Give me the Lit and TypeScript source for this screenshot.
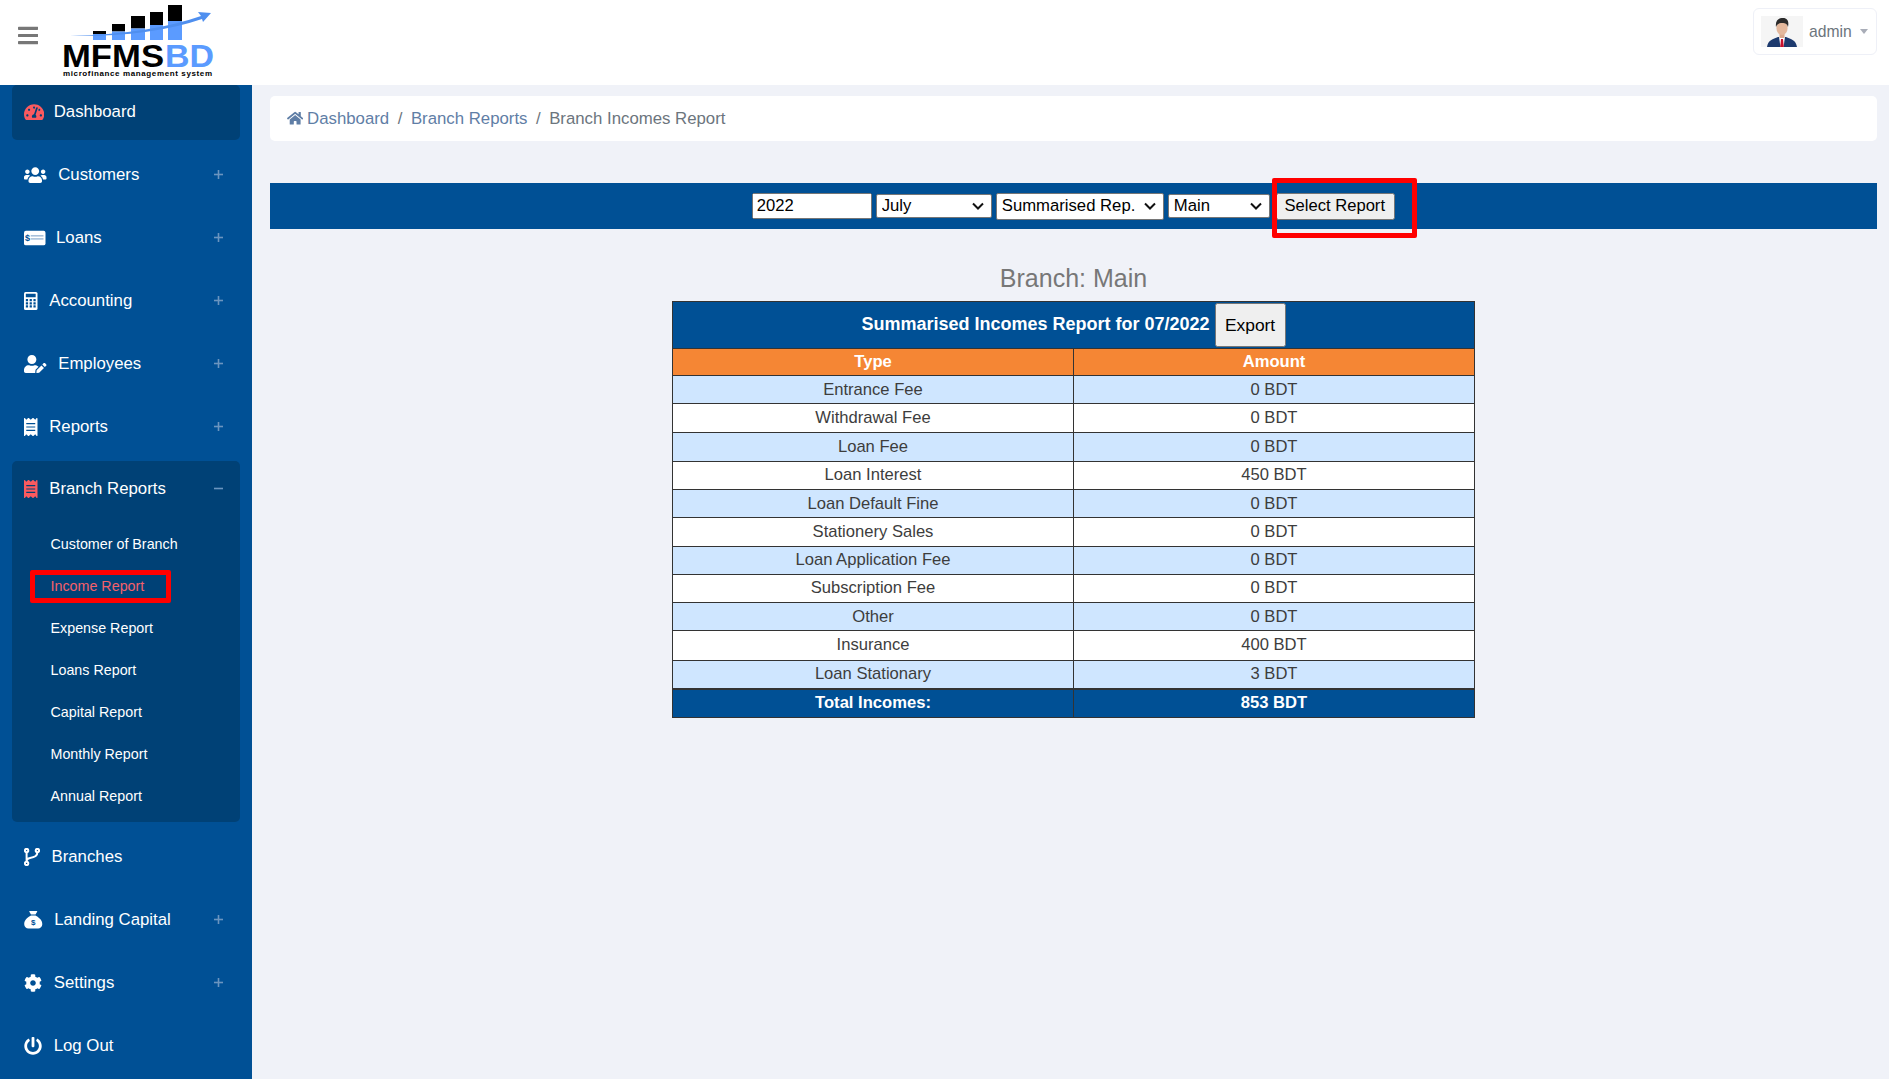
import { LitElement, css, html, svg } from "lit";
import { customElement } from "lit/decorators.js";

const FA: Record<string, [number, string]> = {
  gauge: [576, "M288 32C128.94 32 0 160.94 0 320c0 52.8 14.25 102.26 39.06 144.8 5.61 9.62 16.3 15.2 27.44 15.2h443c11.14 0 21.83-5.58 27.44-15.2C561.75 422.26 576 372.8 576 320c0-159.06-128.94-288-288-288zm0 64c14.71 0 26.58 10.13 30.32 23.65-1.11 2.26-2.64 4.23-3.45 6.67l-9.22 27.67c-5.13 3.49-10.97 6.01-17.64 6.01-17.67 0-32-14.33-32-32S270.33 96 288 96zM96 384c-17.67 0-32-14.33-32-32s14.33-32 32-32 32 14.33 32 32-14.33 32-32 32zm48-160c-17.67 0-32-14.33-32-32s14.33-32 32-32 32 14.33 32 32-14.33 32-32 32zm246.77-72.41l-61.33 184C343.13 347.33 352 364.54 352 384c0 11.72-3.38 22.55-8.88 32H232.88c-5.5-9.45-8.88-20.28-8.88-32 0-33.94 26.5-61.43 59.9-63.59l61.34-184.01c4.17-12.56 17.73-19.45 30.36-15.17 12.57 4.19 19.35 17.79 15.17 30.36zm14.66 57.2l15.52-46.55c3.47-1.29 7.13-2.23 11.05-2.23 17.67 0 32 14.33 32 32s-14.33 32-32 32c-11.38-.01-20.89-6.28-26.57-15.22zM480 384c-17.67 0-32-14.33-32-32s14.33-32 32-32 32 14.33 32 32-14.33 32-32 32z"],
  users: [640, "M96 224c35.3 0 64-28.7 64-64s-28.7-64-64-64-64 28.7-64 64 28.7 64 64 64zm448 0c35.3 0 64-28.7 64-64s-28.7-64-64-64-64 28.7-64 64 28.7 64 64 64zm32 32h-64c-17.6 0-33.5 7.1-45.1 18.6 40.3 22.1 68.9 62 75.1 109.4h66c17.7 0 32-14.3 32-32v-32c0-35.3-28.7-64-64-64zm-256 0c61.9 0 112-50.1 112-112S381.9 32 320 32 208 82.1 208 144s50.1 112 112 112zm76.8 32h-8.3c-20.8 10-43.9 16-68.5 16s-47.6-6-68.5-16h-8.3C179.6 288 128 339.6 128 403.2V432c0 26.5 21.5 48 48 48h288c26.5 0 48-21.5 48-48v-28.8c0-63.6-51.6-115.2-115.2-115.2zm-223.7-13.4C161.5 263.1 145.6 256 128 256H64c-35.3 0-64 28.7-64 64v32c0 17.7 14.3 32 32 32h65.9c6.3-47.4 34.9-87.3 75.2-109.4z"],
  userEdit: [640, "M224 256c70.7 0 128-57.3 128-128S294.7 0 224 0 96 57.3 96 128s57.3 128 128 128zm89.6 32h-16.7c-22.2 10.2-46.9 16-72.9 16s-50.6-5.8-72.9-16h-16.7C60.2 288 0 348.2 0 422.4V464c0 26.5 21.5 48 48 48h274.9c-2.4-6.8-3.4-14-2.6-21.3l6.8-60.9 1.2-11.1 7.9-7.9 77.3-77.3c-24.5-27.7-60-45.5-99.9-45.5zm45.3 145.3l-6.8 61c-1.1 10.2 7.5 18.8 17.6 17.6l60.9-6.8 137.9-137.9-71.7-71.7-137.9 137.8zM633 268.9L595.1 231c-9.3-9.3-24.5-9.3-33.8 0l-37.8 37.8-4.1 4.1 71.8 71.7 41.8-41.8c9.3-9.4 9.3-24.5 0-33.9z"],
  receipt: [384, "M358.4 3.2L320 48 265.6 3.2a15.9 15.9 0 0 0-19.2 0L192 48 137.6 3.2a15.9 15.9 0 0 0-19.2 0L64 48 25.6 3.2C15-4.7 0 2.8 0 16v480c0 13.2 15 20.7 25.6 12.8L64 464l54.4 44.8a15.9 15.9 0 0 0 19.2 0L192 464l54.4 44.8a15.9 15.9 0 0 0 19.2 0L320 464l38.4 44.8c10.5 7.9 25.6.4 25.6-12.8V16c0-13.2-15-20.7-25.6-12.8zM320 360c0 4.4-3.6 8-8 8H72c-4.4 0-8-3.6-8-8v-16c0-4.4 3.6-8 8-8h240c4.4 0 8 3.6 8 8v16zm0-96c0 4.4-3.6 8-8 8H72c-4.4 0-8-3.6-8-8v-16c0-4.4 3.6-8 8-8h240c4.4 0 8 3.6 8 8v16zm0-96c0 4.4-3.6 8-8 8H72c-4.4 0-8-3.6-8-8v-16c0-4.4 3.6-8 8-8h240c4.4 0 8 3.6 8 8v16z"],
  cog: [512, "M487.4 315.7l-42.6-24.6c4.3-23.2 4.3-47 0-70.2l42.6-24.6c4.9-2.8 7.1-8.6 5.5-14-11.1-35.6-30-67.8-54.7-94.6-3.8-4.1-10-5.1-14.8-2.3L380.8 110c-17.9-15.4-38.5-27.3-60.8-35.1V25.8c0-5.6-3.9-10.5-9.4-11.7-36.7-8.2-74.3-7.8-109.2 0-5.5 1.2-9.4 6.1-9.4 11.7V75c-22.2 7.9-42.8 19.8-60.8 35.1L88.7 85.5c-4.9-2.8-11-1.9-14.8 2.3-24.7 26.7-43.6 58.9-54.7 94.6-1.7 5.4.6 11.2 5.5 14L67.3 221c-4.3 23.2-4.3 47 0 70.2l-42.6 24.6c-4.9 2.8-7.1 8.6-5.5 14 11.1 35.6 30 67.8 54.7 94.6 3.8 4.1 10 5.1 14.8 2.3l42.6-24.6c17.9 15.4 38.5 27.3 60.8 35.1v49.2c0 5.6 3.9 10.5 9.4 11.7 36.7 8.2 74.3 7.8 109.2 0 5.5-1.2 9.4-6.1 9.4-11.7v-49.2c22.2-7.9 42.8-19.8 60.8-35.1l42.6 24.6c4.9 2.8 11 1.9 14.8-2.3 24.7-26.7 43.6-58.9 54.7-94.6 1.5-5.5-.7-11.3-5.6-14.1zM256 336c-44.1 0-80-35.9-80-80s35.9-80 80-80 80 35.9 80 80-35.9 80-80 80z"],
  power: [512, "M400 54.1c63 45 104 118.6 104 201.9 0 136.8-110.8 247.7-247.5 248C120 504.3 8.2 393 8 256.4 7.9 173.1 48.9 99.3 111.8 54.2c11.7-8.3 28-4.8 35 7.7L162.6 90c5.9 10.5 3.1 23.8-6.6 31-41.5 30.8-68 79.6-68 134.9-.1 92.3 74.5 168.1 168 168.1 91.6 0 168.6-74.2 168-169.1-.3-51.8-24.7-101.8-68.1-134-9.7-7.2-12.4-20.5-6.5-30.9l15.8-28.1c7-12.4 23.2-16.1 34.8-7.8zM296 264V24c0-13.3-10.7-24-24-24h-32c-13.3 0-24 10.7-24 24v240c0 13.3 10.7 24 24 24h32c13.3 0 24-10.7 24-24z"],
  home: [576, "M280.37 148.26L96 300.11V464a16 16 0 0 0 16 16l112.06-.29a16 16 0 0 0 15.92-16V368a16 16 0 0 1 16-16h64a16 16 0 0 1 16 16v95.64a16 16 0 0 0 16 16.05L464 480a16 16 0 0 0 16-16V300L295.67 148.26a12.19 12.19 0 0 0-15.3 0zM571.6 251.47L488 182.56V44.05a12 12 0 0 0-12-12h-56a12 12 0 0 0-12 12v72.61L318.47 43a48 48 0 0 0-61 0L4.34 251.47a12 12 0 0 0-1.6 16.9l25.5 31A12 12 0 0 0 45.15 301l235.22-193.74a12.19 12.19 0 0 1 15.3 0L530.9 301a12 12 0 0 0 16.9-1.6l25.5-31a12 12 0 0 0-1.7-16.93z"],
  bars: [448, "M16 132h416c8.837 0 16-7.163 16-16V76c0-8.837-7.163-16-16-16H16C7.163 60 0 67.163 0 76v40c0 8.837 7.163 16 16 16zm0 160h416c8.837 0 16-7.163 16-16v-40c0-8.837-7.163-16-16-16H16c-8.837 0-16 7.163-16 16v40c0 8.837 7.163 16 16 16zm0 160h416c8.837 0 16-7.163 16-16v-40c0-8.837-7.163-16-16-16H16c-8.837 0-16 7.163-16 16v40c0 8.837 7.163 16 16 16z"],
};

const icon = (name: string, size = 18) => {
  const [w, d] = FA[name];
  return html`<svg class="ic" width=${(w / 512) * size} height=${size} viewBox="0 0 ${w} 512" fill="currentColor"><path d=${d}></path></svg>`;
};

// drawn by hand, these carry coloured detail inside the shape
const cardIcon = html`<svg class="ic tight" width="21.5" height="18" viewBox="0 0 640 512">
  <rect x="0" y="40" width="640" height="432" rx="56" fill="#fff"></rect>
  <text x="105" y="345" font-size="270" font-weight="700" font-family="Liberation Sans, sans-serif" text-anchor="middle" fill="#005095">$</text>
  <rect x="200" y="170" width="380" height="42" fill="#9db9d6"></rect>
  <rect x="200" y="262" width="380" height="42" fill="#9db9d6"></rect>
</svg>`;

const calcIcon = html`<svg class="ic" width="13.5" height="18" viewBox="0 0 384 512">
  <rect x="0" y="0" width="384" height="512" rx="44" fill="#fff"></rect>
  <rect x="52" y="52" width="280" height="100" rx="8" fill="#005095"></rect>
  ${[200, 290, 380].map((y) =>
    [52, 160, 268].map((x) => svg`<rect x=${x} y=${y} width="64" height="64" rx="8" fill="#005095"></rect>`)
  )}
</svg>`;

const sackIcon = html`<svg class="ic" width="18.5" height="18" viewBox="0 0 512 512">
  <path fill="#fff" d="M192 96h128l47.4-71.12A16 16 0 0 0 354.09 0H157.94a16 16 0 0 0-13.31 24.88zm128 32H192C-10.38 243.4 0 334.55 0 384c0 61.86 53.79 112 120.13 112h271.74C458.21 496 512 445.86 512 384c0-48.95 9.19-141.54-192-256z"></path>
  <text x="256" y="410" font-size="230" font-weight="700" font-family="Liberation Sans, sans-serif" text-anchor="middle" fill="#005095">$</text>
</svg>`;

// outlined fork with hollow end dots
const branchIcon = html`<svg class="ic branch" width="16" height="18" viewBox="0 0 16 18" fill="none" stroke="#fff" stroke-width="2">
  <circle cx="2.6" cy="2.6" r="1.7"></circle>
  <circle cx="2.6" cy="15.4" r="1.7"></circle>
  <circle cx="13.4" cy="2.6" r="1.7"></circle>
  <path d="M2.6 4.3 V13.7 M13.4 4.3 C13.4 9 9 9.6 6 9.9 C4 10.1 2.8 11 2.6 13"></path>
</svg>`;

const MENU = [
  { label: "Customers", ic: icon("users"), more: true },
  { label: "Loans", ic: cardIcon, more: true },
  { label: "Accounting", ic: calcIcon, more: true },
  { label: "Employees", ic: icon("userEdit"), more: true },
  { label: "Reports", ic: icon("receipt"), more: true },
];
const MENU2 = [
  { label: "Branches", ic: branchIcon, more: false },
  { label: "Landing Capital", ic: sackIcon, more: true },
  { label: "Settings", ic: icon("cog"), more: true },
  { label: "Log Out", ic: icon("power"), more: false },
];
const SUBS = ["Customer of Branch", "Income Report", "Expense Report", "Loans Report", "Capital Report", "Monthly Report", "Annual Report"];
const ROWS: [string, string][] = [
  ["Entrance Fee", "0 BDT"],
  ["Withdrawal Fee", "0 BDT"],
  ["Loan Fee", "0 BDT"],
  ["Loan Interest", "450 BDT"],
  ["Loan Default Fine", "0 BDT"],
  ["Stationery Sales", "0 BDT"],
  ["Loan Application Fee", "0 BDT"],
  ["Subscription Fee", "0 BDT"],
  ["Other", "0 BDT"],
  ["Insurance", "400 BDT"],
  ["Loan Stationary", "3 BDT"],
];

const CHEVRON =
  "url(\"data:image/svg+xml,%3Csvg xmlns='http://www.w3.org/2000/svg' width='12' height='8'%3E%3Cpath d='M1 1.5l5 5 5-5' fill='none' stroke='%23111' stroke-width='2'/%3E%3C/svg%3E\")";

@customElement("app-root")
export class AppRoot extends LitElement {
  static styles = css`
    :host {
      display: block;
      height: 100vh;
      overflow: hidden;
      background: #f0f2f8;
      font-family: "Liberation Sans", Arial, sans-serif;
      font-size: 16.6px;
    }
    .top {
      display: flex;
      align-items: flex-start;
      height: 85px;
      background: #fff;
      padding: 0 12px 0 18px;
    }
    .burger {
      color: #777;
      display: flex;
      margin: 24px 10px 0 0;
    }
    .logo {
      display: block;
    }
    .user {
      margin: 8px 0 0 auto;
      display: flex;
      align-items: center;
      width: 124px;
      height: 47px;
      box-sizing: border-box;
      border: 1px solid #eef0f7;
      border-radius: 6px;
      padding-left: 7px;
      color: #6c757d;
      font-size: 15.7px;
    }
    .user svg {
      display: block;
      margin-right: 6px;
    }
    .caret {
      margin-left: 8px;
      border: 4.5px solid transparent;
      border-top: 5px solid #a9adb8;
      border-bottom: 0;
    }
    .body {
      display: flex;
      height: 994px;
    }
    .side {
      width: 252px;
      flex: none;
      box-sizing: border-box;
      background: #005095;
      padding: 0 12px;
      color: #fff;
      font-size: 16.8px;
    }
    .item {
      display: flex;
      align-items: center;
      height: 55px;
      padding: 0 12px 2px;
      box-sizing: border-box;
      margin-bottom: 8px;
      border-radius: 5px;
    }
    .item.on {
      background: #004176;
    }
    .ic {
      flex: none;
      margin-right: 11.7px;
      display: block;
    }
    .ic.tight {
      margin-right: 10.5px;
    }
    .on .ic {
      margin-right: 9.5px;
    }
    .ic.branch {
      margin-right: 11.5px;
    }
    .red {
      color: #fb5a5f;
    }
    .sign {
      margin-left: auto;
      margin-right: 5.5px;
      width: 9px;
      height: 9px;
      flex: none;
      color: #6b95bf;
    }
    .group {
      background: #004176;
      border-radius: 5px;
      margin: -2px 0 8px;
      padding-bottom: 5px;
    }
    .group .item {
      margin-bottom: 7px;
      padding-bottom: 0;
    }
    .sub {
      position: relative;
      display: flex;
      align-items: center;
      height: 42px;
      padding-left: 38.5px;
      font-size: 14.3px;
    }
    .sub.cur {
      color: #f4606a;
    }
    .mark {
      position: absolute;
      box-sizing: border-box;
      border: 5px solid #f00;
      border-radius: 2px;
    }
    .sub .mark {
      left: 18px;
      top: 5px;
      width: 141px;
      height: 33px;
    }
    .main {
      flex: 1;
      min-width: 0;
      padding: 11px 12px 0 18px;
      display: flex;
      flex-direction: column;
    }
    .crumb {
      display: flex;
      align-items: center;
      height: 45px;
      background: #fff;
      border-radius: 5px;
      padding-left: 17px;
      color: #6c757d;
      font-size: 16.8px;
    }
    .crumb a {
      color: #5f7ea6;
      display: flex;
      align-items: center;
    }
    .crumb .ic {
      margin-right: 3.8px;
    }
    .crumb i {
      font-style: normal;
      padding: 0 8.5px;
    }
    .filters {
      margin-top: 42px;
      height: 46px;
      background: #005095;
      display: flex;
      align-items: center;
      justify-content: center;
      gap: 4px;
    }
    .filters input,
    .filters select,
    .filters button,
    .exp {
      font-family: inherit;
      font-size: 16.6px;
      box-sizing: border-box;
      color: #000;
    }
    .filters input {
      width: 120px;
      height: 26px;
      padding: 1px 3px;
    }
    .filters select {
      appearance: none;
      height: 24px;
      padding: 0 20px 0 5px;
      border: 1px solid #767676;
      border-radius: 2px;
      background: #fff no-repeat right 7px center;
      font-size: 16.7px;
      line-height: 20px;
    }
    .filters select.big {
      height: 27px;
      width: 168px;
    }
    .filters select.july {
      width: 116px;
    }
    .filters select.main-opt {
      width: 102px;
    }
    .wrap {
      position: relative;
      display: flex;
      margin-left: 2.5px;
    }
    .wrap button {
      width: 119px;
      height: 27px;
      padding: 0 2px 0 0;
    }
    .wrap .mark {
      left: -4px;
      top: -15px;
      width: 145px;
      height: 60px;
    }
    h2 {
      margin: 34px 0 0;
      text-align: center;
      font-weight: 400;
      font-size: 25px;
      line-height: 30px;
      color: #777;
    }
    table {
      margin: 8px auto 0;
      width: 803px;
      table-layout: fixed;
      border-collapse: collapse;
      border: 1px solid #333;
      color: #3d3d3d;
    }
    td,
    th {
      border: 1px solid #333;
      padding: 0;
      text-align: center;
      height: 27.25px;
      font-weight: 400;
    }
    tr:nth-child(odd) td {
      background: #cfe6ff;
    }
    tr:nth-child(even) td {
      background: #fff;
    }
    /* the source table rounds up here, the rows after it sit a pixel lower */
    tr.tall td {
      height: 28.25px;
    }
    .title th {
      height: 46px;
      background: #005095;
      color: #fff;
      font-weight: 700;
      font-size: 18px;
    }
    .exp {
      height: 44px;
      width: 71px;
      padding: 0;
      vertical-align: middle;
      font-size: 17.4px;
      font-weight: 400;
    }
    .head th {
      height: 26px;
      background: #f58634;
      color: #fff;
      font-weight: 700;
    }
    .total th {
      background: #005095;
      color: #fff;
      font-weight: 700;
      border-top-width: 2px;
    }
  `;

  renderItem(m: { label: string; ic: unknown; more: boolean }) {
    return html`<div class="item">
      ${m.ic}<span>${m.label}</span>
      ${m.more ? this.sign(true) : ""}
    </div>`;
  }

  sign(plus: boolean) {
    return html`<svg class="sign" viewBox="0 0 9 9" fill="currentColor">
      <rect x="0" y="3.7" width="9" height="1.6"></rect>
      ${plus ? svg`<rect x="3.7" y="0" width="1.6" height="9"></rect>` : ""}
    </svg>`;
  }

  logo() {
    const bars = [
      [33, 31, 13, 34],
      [52, 24, 13, 31.5],
      [71, 16, 14, 28.5],
      [90, 12, 13, 25],
      [108, 5, 14, 21],
    ];
    return html`<svg class="logo" width="160" height="80" viewBox="0 0 160 80">
      ${bars.map(
        ([x, top, w, curve]) => svg`
          <rect x=${x} y=${top} width=${w} height=${curve - top} fill="#000"></rect>
          <rect x=${x} y=${curve} width=${w} height=${40 - curve} fill="#5b9bff"></rect>`
      )}
      <path d="M10 36 Q90 34 141 16 L138 12 L151 13 L143 22 L142 19 Q90 37 10 36Z" fill="#4f8fef"></path>
      <text x="2" y="66.5" font-family="Liberation Sans, sans-serif" font-weight="700" font-size="32" textLength="102" lengthAdjust="spacingAndGlyphs">MFMS</text>
      <text x="105" y="66.5" font-family="Liberation Sans, sans-serif" font-weight="700" font-size="32" textLength="49" lengthAdjust="spacingAndGlyphs" fill="#5b9bff">BD</text>
      <text x="3" y="75.5" font-family="Liberation Sans, sans-serif" font-weight="700" font-size="8" textLength="149">microfinance management system</text>
    </svg>`;
  }

  avatar() {
    return html`<svg width="42" height="31" viewBox="0 0 42 31">
      <rect width="42" height="31" fill="#f5f5f5"></rect>
      <path d="M6 31 C7 24 12 23 17 21 L25 21 C30 23 35 24 36 31Z" fill="#1d3a6e"></path>
      <path d="M18 21 L24 21 L22.5 31 L19.5 31Z" fill="#fff"></path>
      <path d="M20 23 L22 23 L22.8 31 L19.2 31Z" fill="#c8102e"></path>
      <rect x="18.5" y="16" width="5" height="6" fill="#d9a88c"></rect>
      <ellipse cx="21" cy="12" rx="5.6" ry="7" fill="#e4b89c"></ellipse>
      <path d="M15 11 C14 4 18 2 22 2 C27 2 28 6 27 11 C26 8 25 7 21 7 C18 7 16 8 15 11Z" fill="#2b2b2b"></path>
    </svg>`;
  }

  render() {
    const arrow = `background-image:${CHEVRON}`;
    return html`
      <div class="top">
        <div class="burger">${icon("bars", 23)}</div>
        ${this.logo()}
        <div class="user">${this.avatar()}<span>admin</span><span class="caret"></span></div>
      </div>
      <div class="body">
        <nav class="side">
          <div class="item on"><span class="red">${icon("gauge")}</span><span>Dashboard</span></div>
          ${MENU.map((m) => this.renderItem(m))}
          <div class="group">
            <div class="item">
              <span class="red">${icon("receipt")}</span><span>Branch Reports</span>${this.sign(false)}
            </div>
            ${SUBS.map(
              (s) => html`<div class="sub ${s === "Income Report" ? "cur" : ""}">
                ${s}${s === "Income Report" ? html`<div class="mark"></div>` : ""}
              </div>`
            )}
          </div>
          ${MENU2.map((m) => this.renderItem(m))}
        </nav>
        <main class="main">
          <div class="crumb">
            <a>${icon("home", 14.5)}Dashboard</a><i>/</i><a>Branch Reports</a><i>/</i><span>Branch Incomes Report</span>
          </div>
          <div class="filters">
            <input type="text" value="2022" />
            <select class="july" style=${arrow}><option>July</option></select>
            <select class="big" style=${arrow}><option>Summarised Rep.</option></select>
            <select class="main-opt" style=${arrow}><option>Main</option></select>
            <div class="wrap">
              <button>Select Report</button>
              <div class="mark"></div>
            </div>
          </div>
          <h2>Branch: Main</h2>
          <table>
            <tbody>
              <tr class="title">
                <th colspan="2">Summarised Incomes Report for 07/2022 <button class="exp">Export</button></th>
              </tr>
              <tr class="head"><th>Type</th><th>Amount</th></tr>
              ${ROWS.map(
                (r) => html`<tr class=${r[0] === "Loan Fee" || r[0] === "Insurance" ? "tall" : ""}><td>${r[0]}</td><td>${r[1]}</td></tr>`
              )}
              <tr class="total"><th>Total Incomes:</th><th>853 BDT</th></tr>
            </tbody>
          </table>
        </main>
      </div>
    `;
  }
}
